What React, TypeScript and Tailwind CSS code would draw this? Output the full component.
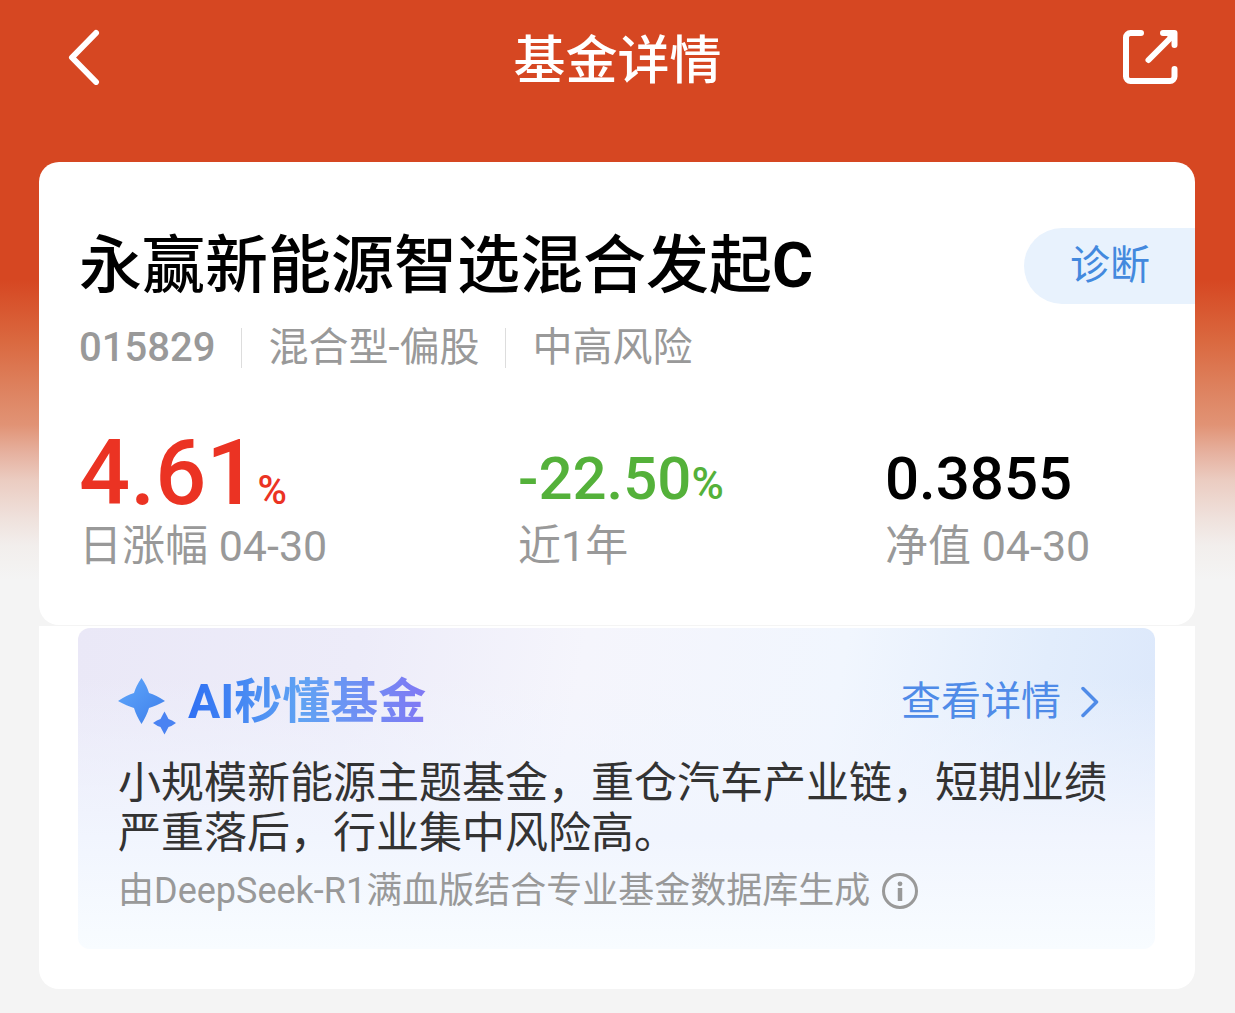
import type { ReactNode } from "react";

interface StatProps {
  label: string;
  children: ReactNode;
}

const Stat = ({ label, children }: StatProps) => {
  return (
    <div className="flex flex-col-reverse whitespace-nowrap">
      <dt className="text-[43px] leading-[50px] text-[#999999]">{label}</dt>
      <dd>{children}</dd>
    </div>
  );
};

const BackIcon = () => (
  <svg width="32" height="56" viewBox="0 0 32 56" fill="none" aria-hidden="true">
    <path
      d="M28 4 4 28.500 28 53"
      stroke="currentColor"
      strokeWidth="6"
      strokeLinecap="round"
      strokeLinejoin="round"
    />
  </svg>
);

const ShareIcon = () => (
  <svg width="56" height="56" viewBox="0 0 56 56" fill="none" aria-hidden="true">
    <g
      stroke="currentColor"
      strokeWidth="6"
      strokeLinecap="round"
      strokeLinejoin="round"
    >
      <path d="M18 4H7.500a4.500 4.500 0 0 0-4.500 4.500v39a4.500 4.500 0 0 0 4.500 4.500h39.500a4.500 4.500 0 0 0 4.500-4.500V40" />
      <path d="M40 4H51.500v12" />
      <path d="M25.500 31 50 6.500" />
    </g>
    <path d="M42 5h9v9z" fill="currentColor" />
  </svg>
);

const SparkleIcon = () => (
  <svg width="58" height="58" viewBox="0 0 58 58" aria-hidden="true">
    <defs>
      <linearGradient id="sparkle-large" x1="0" y1="0" x2="1" y2="1">
        <stop offset="0.200" stopColor="#5aa0f8" />
        <stop offset="0.800" stopColor="#4486ee" />
      </linearGradient>
    </defs>
    <path
      d="M23.500 1Q29 9 31 16Q38 18 47 24Q38 29 31 31Q29 38 23.500 47Q18 38 16 31Q9 29 0 24Q9 18 16 16Q18 9 23.500 1Z"
      fill="url(#sparkle-large)"
    />
    <path
      d="M46.500 34.500Q49 39 50.500 42Q54 43 58 46Q54 49 50.500 50Q49 53 46.500 57.500Q44 53 42.500 50Q39 49 35 46Q39 43 42.500 42Q44 39 46.500 34.500Z"
      fill="#4a83f2"
    />
  </svg>
);

const ChevronIcon = () => (
  <svg width="18" height="32" viewBox="0 0 18 32" fill="none" aria-hidden="true">
    <path
      d="m2 2.500 13.500 13.500L2 29.500"
      stroke="currentColor"
      strokeWidth="3.500"
      strokeLinecap="round"
      strokeLinejoin="round"
    />
  </svg>
);

const InfoIcon = () => (
  <svg width="36" height="36" viewBox="0 0 36 36" fill="none" aria-hidden="true">
    <circle cx="18" cy="18" r="16.500" stroke="currentColor" strokeWidth="3" />
    <circle cx="18" cy="10.800" r="2.400" fill="currentColor" />
    <path d="M18 15v13" stroke="currentColor" strokeWidth="4.500" />
  </svg>
);

const Divider = () => <span className="h-10 w-px bg-[#dddddd]" />;

const App = () => {
  return (
    <div className="min-h-screen bg-[#f4f4f4] bg-[linear-gradient(to_bottom,#d64722_0px,#d64722_280px,#da683f_340px,#de8563_395px,#e19375_425px,#e6b09e_452px,#ebccc1_480px,#efe1dc_518px,#f2eeec_545px,#f4f4f4_580px)] bg-no-repeat pr-10 pb-6 pl-[39px] font-['Roboto','Noto_Sans_CJK_SC',sans-serif]">
      <header className="flex h-[114px] items-center justify-between pr-4 pl-[29px] text-white">
        <button type="button" aria-label="返回" className="w-11">
          <BackIcon />
        </button>
        <h1 className="font-['Noto_Sans_CJK_SC',sans-serif] text-[52px] font-medium">
          基金详情
        </h1>
        <button type="button" aria-label="分享">
          <ShareIcon />
        </button>
      </header>

      <main className="mt-12">
        <section className="rounded-[20px] bg-white pt-[66px] pb-[54px] pl-10">
          <div className="flex items-center justify-between">
            <h2 className="text-[63px] leading-[76px] font-medium text-black">
              永赢新能源智选混合发起<span className="font-bold">C</span>
            </h2>
            <button
              type="button"
              className="h-[76px] rounded-l-full bg-[#e8f2fd] pr-[45px] pl-[46px] text-[40px] text-[#4389de]"
            >
              诊断
            </button>
          </div>

          <div className="mt-5 flex h-12 items-center gap-[26px] text-[40px] text-[#999999]">
            <span className="font-medium">015829</span>
            <Divider />
            <span>混合型-偏股</span>
            <Divider />
            <span>中高风险</span>
          </div>

          <dl className="mt-[55px] mr-10 grid grid-cols-[439fr_367fr_270fr] items-end">
            <Stat label="日涨幅 04-30">
              <span className="flex items-baseline text-[90px] leading-[94px] font-medium text-[#eb3323]">
                4.61
                <span className="text-[40px] leading-none">%</span>
              </span>
            </Stat>
            <Stat label="近1年">
              <span className="flex items-baseline text-[60px] leading-[84px] font-medium text-[#54b13a]">
                -22.50
                <span className="text-[44px] leading-none">%</span>
              </span>
            </Stat>
            <Stat label="净值 04-30">
              <span className="flex items-baseline text-[60px] leading-[84px] font-medium text-black">
                0.3855
              </span>
            </Stat>
          </dl>
        </section>

        <section className="mt-px rounded-b-[20px] bg-white pt-0.5 pr-10 pb-10 pl-[39px]">
          <div className="rounded-xl bg-[linear-gradient(to_bottom,transparent_0%,transparent_15%,#f1f5fe_65%,#f8fcff_100%),linear-gradient(100deg,#eae8f7_0%,#edecf9_25%,#f5f5fc_45%,#f1f6fe_68%,#e2edfc_86%,#dbe7fb_100%)] px-10 pt-11 pb-[34px]">
            <div className="flex h-[60px] items-center justify-between">
              <div className="flex items-center gap-3">
                <div className="pt-2">
                  <SparkleIcon />
                </div>
                <h3 className="bg-[linear-gradient(to_right,#2f70f3,#60a3f3_48%,#8078f4)] bg-clip-text text-[48px] leading-[60px] font-bold text-transparent">
                  AI秒懂基金
                </h3>
              </div>
              <a
                href="#detail"
                className="mr-4 flex items-center gap-5 text-[40px] text-[#4f8be8]"
              >
                查看详情
                <ChevronIcon />
              </a>
            </div>
            <p className="mt-[26px] text-[43px] leading-[50px] text-[#333333]">
              小规模新能源主题基金，重仓汽车产业链，短期业绩严重落后，行业集中风险高。
            </p>
            <div className="mt-[9px] flex h-12 items-center gap-3 text-[36px] text-[#999999]">
              <span>由DeepSeek-R1满血版结合专业基金数据库生成</span>
              <button type="button" aria-label="说明">
                <InfoIcon />
              </button>
            </div>
          </div>
        </section>
      </main>
    </div>
  );
};

export default App;
